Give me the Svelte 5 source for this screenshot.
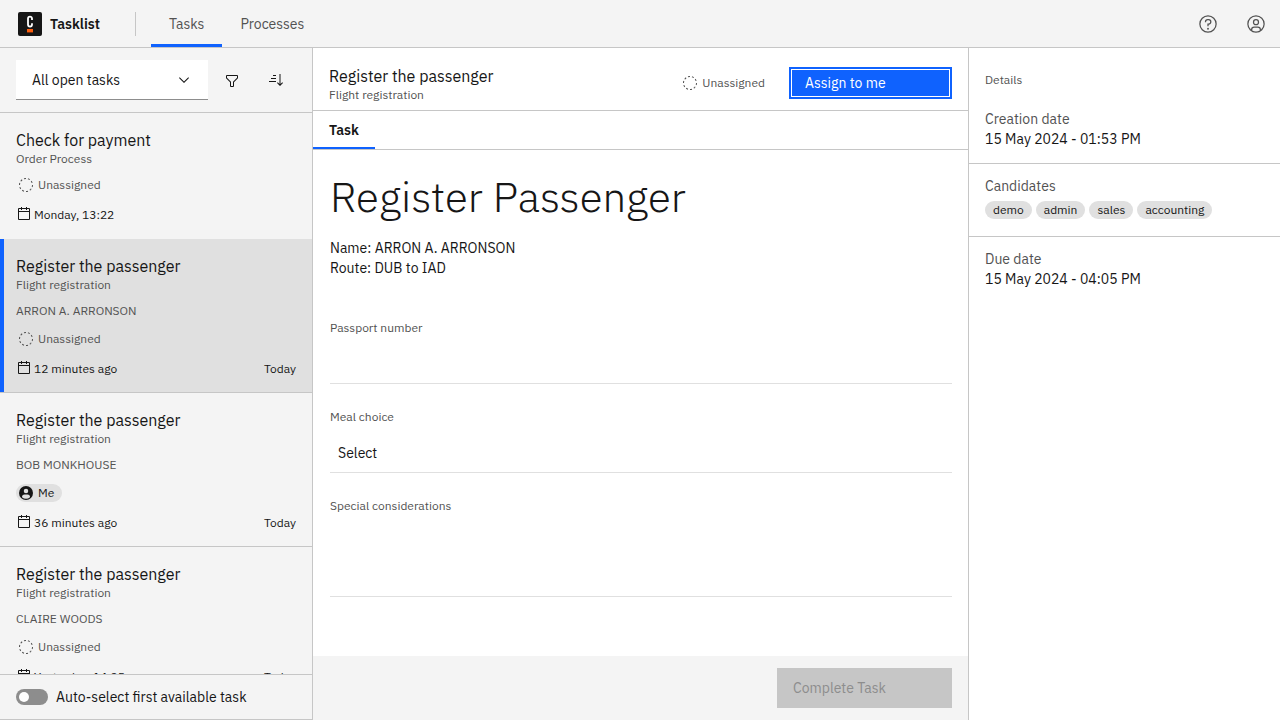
<script lang="ts">
  interface Task {
    name: string;
    process: string;
    context?: string;
    mine?: boolean;
    created: string;
    due?: string;
  }

  const tasks: Task[] = [
    { name: 'Check for payment', process: 'Order Process', created: 'Monday, 13:22' },
    { name: 'Register the passenger', process: 'Flight registration', context: 'ARRON A. ARRONSON', created: '12 minutes ago', due: 'Today' },
    { name: 'Register the passenger', process: 'Flight registration', context: 'BOB MONKHOUSE', mine: true, created: '36 minutes ago', due: 'Today' },
    { name: 'Register the passenger', process: 'Flight registration', context: 'CLAIRE WOODS', created: 'Yesterday, 14:35', due: 'Today' }
  ];
  const candidates = ['demo', 'admin', 'sales', 'accounting'];

  let selected = $state(1);
  let autoSelect = $state(false);
</script>

{#snippet unassigned()}
  <span class="assignee">
    <svg width="16" height="16" viewBox="0 0 32 32" fill="currentColor" aria-hidden="true">
      <path d="M7.7,4.7a14.7,14.7,0,0,0-3,3.1L6.3,9A13.26,13.26,0,0,1,8.9,6.3ZM4.6,12.3l-1.9-.6A12.51,12.51,0,0,0,2,16H4A11.48,11.48,0,0,1,4.6,12.3ZM2.7,20.4a14.4,14.4,0,0,0,2,3.9l1.6-1.2a12.89,12.89,0,0,1-1.7-3.3ZM7.8,27.3a14.4,14.4,0,0,0,3.9,2l.6-1.9A12.89,12.89,0,0,1,9,25.7ZM11.7,2.7l.6,1.9A11.48,11.48,0,0,1,16,4V2A12.51,12.51,0,0,0,11.7,2.7ZM24.2,27.3a15.18,15.18,0,0,0,3.1-3.1L25.7,23A11.53,11.53,0,0,1,23,25.7ZM27.4,19.7l1.9.6A15.47,15.47,0,0,0,30,16H28A11.48,11.48,0,0,1,27.4,19.7ZM29.2,11.6a14.4,14.4,0,0,0-2-3.9L25.6,8.9a12.89,12.89,0,0,1,1.7,3.3ZM24.1,4.6a14.4,14.4,0,0,0-3.9-2l-.6,1.9a12.89,12.89,0,0,1,3.3,1.7ZM20.3,29.3l-.6-1.9A11.48,11.48,0,0,1,16,28v2A21.42,21.42,0,0,0,20.3,29.3Z" />
    </svg>
    Unassigned
  </span>
{/snippet}

<div class="app">
  <header class="topbar">
    <a class="brand" href="#home">
      <svg width="24" height="24" viewBox="0 0 24 24" aria-hidden="true">
        <rect width="24" height="24" rx="2" fill="#161616" />
        <path d="M14 8V6.6a2 2 0 0 0-4 0v6a2 2 0 0 0 4 0v-1.4" fill="none" stroke="#fff" stroke-width="1.8" />
        <rect x="9" y="17" width="6" height="3.4" fill="#fc5d0d" />
      </svg>
      <span>Tasklist</span>
    </a>
    <nav>
      <a class="active" href="#tasks">Tasks</a>
      <a href="#processes">Processes</a>
    </nav>
    <div class="tools">
      <button type="button" aria-label="Help">
        <svg width="20" height="20" viewBox="0 0 32 32" fill="currentColor">
          <path d="M16,2A14,14,0,1,0,30,16,14,14,0,0,0,16,2Zm0,26A12,12,0,1,1,28,16,12,12,0,0,1,16,28Z" />
          <circle cx="16" cy="23.5" r="1.5" />
          <path d="M17,8H15.5A4.49,4.49,0,0,0,11,12.5V13h2v-.5A2.5,2.5,0,0,1,15.5,10H17a2.5,2.5,0,0,1,0,5H15v4.5h2V17a4.5,4.5,0,0,0,0-9Z" />
        </svg>
      </button>
      <button type="button" aria-label="Account">
        <svg width="20" height="20" viewBox="0 0 32 32" fill="currentColor">
          <path d="M16,8a5,5,0,1,0,5,5A5,5,0,0,0,16,8Zm0,8a3,3,0,1,1,3-3A3.0034,3.0034,0,0,1,16,16Z" />
          <path d="M16,2A14,14,0,1,0,30,16,14.0158,14.0158,0,0,0,16,2ZM10,26.3765V25a3.0033,3.0033,0,0,1,3-3h6a3.0033,3.0033,0,0,1,3,3v1.3765a11.8989,11.8989,0,0,1-12,0Zm13.9925-1.4507A5.0016,5.0016,0,0,0,19,20H13a5.0016,5.0016,0,0,0-4.9925,4.9258,12,12,0,1,1,15.985,0Z" />
        </svg>
      </button>
    </div>
  </header>

  <div class="columns">
    <section class="tasks" aria-label="Tasks">
      <div class="filters">
        <div class="dropdown">
          <select aria-label="Task filter">
            <option>All open tasks</option>
          </select>
          <svg width="16" height="16" viewBox="0 0 16 16" aria-hidden="true">
            <path d="M8 11L3 6 3.7 5.3 8 9.6 12.3 5.3 13 6z" fill="#161616" />
          </svg>
        </div>
        <button type="button" aria-label="Custom filter">
          <svg width="16" height="16" viewBox="0 0 32 32" fill="currentColor">
            <path d="M18,30H14a2,2,0,0,1-2-2V20.41L4.59,13A2,2,0,0,1,4,11.59V8A2,2,0,0,1,6,6H26a2,2,0,0,1,2,2V11.59A2,2,0,0,1,27.41,13L20,20.41V28A2,2,0,0,1,18,30ZM6,8V11.59l8,8V28h4V19.59l8-8V8Z" />
          </svg>
        </button>
        <button type="button" aria-label="Sort tasks">
          <svg width="16" height="16" viewBox="0 0 32 32" fill="currentColor">
            <path d="M18 22L19.414 20.586 23 24.172 23 4 25 4 25 24.172 28.586 20.586 30 22 24 28 18 22zM2 18H16V20H2zM6 12H16V14H6zM10 6H16V8H10z" />
          </svg>
        </button>
      </div>

      <div class="list">
        {#each tasks as task, i}
          <button type="button" class="card" class:selected={selected === i} class:before={selected === i + 1} onclick={() => (selected = i)}>
            <span class="head">
              <span class="title">{task.name}</span>
              <span class="sub">{task.process}</span>
            </span>
            {#if task.context}
              <span class="row muted">{task.context}</span>
            {/if}
            <span class="row">
              {#if task.mine}
                <span class="assignee me">
                  <svg width="16" height="16" viewBox="0 0 32 32" aria-hidden="true">
                    <circle cx="16" cy="16" r="14" fill="#161616" />
                    <circle cx="16" cy="12" r="4.5" fill="#e0e0e0" />
                    <path d="M8 24.5V24a5 5 0 0 1 5-5h6a5 5 0 0 1 5 5v.5a11.8 11.8 0 0 1-16 0Z" fill="#e0e0e0" />
                  </svg>
                  Me
                </span>
              {:else}
                {@render unassigned()}
              {/if}
            </span>
            <span class="dates">
              <span class="created">
                <svg width="16" height="16" viewBox="0 0 32 32" fill="currentColor" aria-hidden="true">
                  <path d="M26,4H22V2H20V4H12V2H10V4H6A2,2,0,0,0,4,6V26a2,2,0,0,0,2,2H26a2,2,0,0,0,2-2V6A2,2,0,0,0,26,4Zm0,22H6V12H26Zm0-16H6V6h4V8h2V6h8V8h2V6h4Z" />
                </svg>
                {task.created}
              </span>
              {#if task.due}<span>{task.due}</span>{/if}
            </span>
          </button>
        {/each}
      </div>

      <label class="auto">
        <input type="checkbox" role="switch" bind:checked={autoSelect} />
        <span>Auto-select first available task</span>
      </label>
    </section>

    <main>
      <div class="taskbar">
        <div class="head">
          <span class="title">Register the passenger</span>
          <span class="sub">Flight registration</span>
        </div>
        {@render unassigned()}
        <button type="button" class="assign">Assign to me</button>
      </div>
      <div class="tabs">
        <a href="#task">Task</a>
      </div>
      <form onsubmit={(e) => e.preventDefault()}>
        <h1>Register Passenger</h1>
        <p>Name: ARRON A. ARRONSON<br />Route: DUB to IAD</p>
        <div class="field">
          <label for="passport">Passport number</label>
          <input id="passport" type="text" />
        </div>
        <div class="field">
          <label for="meal">Meal choice</label>
          <select id="meal">
            <option>Select</option>
          </select>
        </div>
        <div class="field">
          <label for="special">Special considerations</label>
          <textarea id="special"></textarea>
        </div>
      </form>
      <footer>
        <button type="button" disabled>Complete Task</button>
      </footer>
    </main>

    <aside>
      <h2>Details</h2>
      <dl>
        <div>
          <dt>Creation date</dt>
          <dd>15 May 2024 - 01:53 PM</dd>
        </div>
        <div>
          <dt>Candidates</dt>
          <dd class="tags">
            {#each candidates as group}<span>{group}</span>{/each}
          </dd>
        </div>
        <div>
          <dt>Due date</dt>
          <dd>15 May 2024 - 04:05 PM</dd>
        </div>
      </dl>
    </aside>
  </div>
</div>

<style>
  :global(body) {
    margin: 0;
  }

  .app {
    --ink: #161616;
    --muted: #525252;
    --line: #c6c6c6;
    --layer: #f4f4f4;
    --blue: #0f62fe;
    display: flex;
    flex-direction: column;
    height: 100vh;
    font-family: 'IBM Plex Sans', 'Liberation Sans', sans-serif;
    font-size: 14px;
    line-height: 20px;
    color: var(--ink);
    background: #fff;
  }

  .app *,
  .app *::before {
    box-sizing: border-box;
  }

  svg {
    display: block;
    flex: none;
  }

  a {
    color: inherit;
    text-decoration: none;
  }

  button,
  select,
  input,
  textarea {
    margin: 0;
    padding: 0;
    border: 0;
    border-radius: 0;
    font: inherit;
    color: inherit;
    background: transparent;
  }

  .topbar {
    display: flex;
    flex: none;
    height: 48px;
    border-bottom: 1px solid var(--line);
    background: var(--layer);
  }

  .brand {
    display: flex;
    align-items: center;
    gap: 8px;
    width: 136px;
    height: 24px;
    margin: 12px 15px 0 0;
    padding-left: 18px;
    border-right: 1px solid var(--line);
    font-weight: 600;
  }

  nav {
    display: flex;
  }

  nav a {
    padding: 14px 18px 0;
    border-bottom: 3px solid transparent;
    color: var(--muted);
  }

  nav a.active {
    border-color: var(--blue);
  }

  .tools {
    display: flex;
    margin-left: auto;
    color: var(--muted);
  }

  .tools button {
    display: grid;
    place-items: center;
    width: 48px;
  }

  .columns {
    display: grid;
    grid-template-columns: 313px minmax(0, 1fr) 312px;
    grid-template-rows: minmax(0, 1fr);
    flex: 1;
    min-height: 0;
  }

  .tasks {
    display: flex;
    flex-direction: column;
    border-right: 1px solid var(--line);
    background: var(--layer);
  }

  .filters {
    display: flex;
    flex: none;
    gap: 4px;
    padding: 12px 16px;
    border-bottom: 1px solid var(--line);
  }

  .filters button {
    display: grid;
    place-items: center;
    width: 40px;
    height: 40px;
  }

  .dropdown {
    display: grid;
    flex: 1;
    align-items: center;
  }

  .dropdown select,
  .dropdown svg {
    grid-area: 1 / 1;
  }

  .dropdown svg {
    justify-self: end;
    margin-right: 16px;
    pointer-events: none;
  }

  .dropdown select {
    appearance: none;
    height: 40px;
    padding: 0 40px 0 16px;
    border-bottom: 1px solid #8d8d8d;
    background: #fff;
  }

  .list {
    flex: 1;
    min-height: 0;
    overflow-y: auto;
    scrollbar-width: none;
  }

  .card {
    display: flex;
    flex-direction: column;
    gap: 10px;
    width: 100%;
    padding: 16px 16px 14px;
    border-bottom: 1px solid var(--line);
    text-align: left;
    font-size: 12px;
    line-height: 18px;
  }

  .card.selected {
    background: linear-gradient(to right, var(--blue) 4px, #e0e0e0 4px);
    background-clip: padding-box;
  }

  .card.before {
    border-bottom-color: transparent;
  }

  .head {
    display: flex;
    flex-direction: column;
  }

  .title {
    font-size: 16px;
    line-height: 23px;
  }

  .sub {
    font-size: 12px;
    line-height: 14px;
    color: var(--muted);
  }

  .row {
    display: flex;
  }

  .muted {
    color: var(--muted);
  }

  .assignee {
    display: flex;
    align-items: center;
    gap: 4px;
    padding: 0 8px 0 2px;
    border-radius: 9px;
    font-size: 12px;
    line-height: 18px;
    color: var(--muted);
  }

  .me {
    color: var(--ink);
    background: #e0e0e0;
  }

  .dates {
    display: flex;
    justify-content: space-between;
    padding-top: 2px;
  }

  .created {
    display: flex;
    align-items: flex-start;
    gap: 2px;
  }

  .auto {
    display: flex;
    flex: none;
    align-items: center;
    gap: 8px;
    height: 46px;
    padding: 0 16px;
    border-top: 1px solid var(--line);
    border-bottom: 1px solid var(--line);
  }

  .auto input {
    appearance: none;
    display: flex;
    width: 32px;
    height: 16px;
    padding: 3px;
    border-radius: 8px;
    background: #8d8d8d;
  }

  .auto input::before {
    content: '';
    width: 10px;
    height: 10px;
    border-radius: 50%;
    background: #fff;
  }

  .auto input:checked {
    justify-content: flex-end;
    background: #198038;
  }

  main {
    display: flex;
    flex-direction: column;
    min-width: 0;
  }

  .taskbar {
    display: flex;
    flex: none;
    align-items: center;
    padding: 8px 16px 0;
    height: 63px;
    border-bottom: 1px solid var(--line);
  }

  .taskbar .head {
    flex: 1;
  }

  .assign {
    width: 163px;
    height: 32px;
    margin-left: 16px;
    padding: 0 16px;
    text-align: left;
    color: #fff;
    background: var(--blue);
    box-shadow:
      inset 0 0 0 2px var(--blue),
      inset 0 0 0 3px #fff;
  }

  .tabs {
    display: flex;
    flex: none;
    height: 39px;
    border-bottom: 1px solid var(--line);
  }

  .tabs a {
    padding: 9px 16px 0;
    border-bottom: 2px solid var(--blue);
    font-weight: 600;
  }

  form {
    display: flex;
    flex: 1;
    flex-direction: column;
    min-height: 0;
    padding: 22px 16px 0 17px;
    overflow-y: auto;
    scrollbar-width: none;
  }

  h1 {
    margin: 0 0 16px;
    font-size: 42px;
    font-weight: 300;
    line-height: 50px;
  }

  p {
    margin: 0 0 42px;
  }

  .field {
    display: flex;
    flex-direction: column;
    gap: 8px;
    margin-bottom: 25px;
  }

  .field label {
    font-size: 12px;
    line-height: 16px;
    color: var(--muted);
  }

  .field input,
  .field select {
    height: 40px;
    padding: 0 8px;
    border-bottom: 1px solid #e0e0e0;
  }

  .field select {
    appearance: none;
  }

  .field textarea {
    height: 75px;
    padding: 8px;
    border-bottom: 1px solid #e0e0e0;
    resize: none;
  }

  footer {
    display: flex;
    flex: none;
    justify-content: flex-end;
    padding: 12px 16px;
    background: var(--layer);
  }

  footer button {
    width: 175px;
    height: 40px;
    padding: 0 16px;
    text-align: left;
    color: #8d8d8d;
    background: var(--line);
  }

  aside {
    border-left: 1px solid var(--line);
  }

  h2 {
    margin: 0;
    padding: 24px 16px 9px;
    font-size: 12px;
    font-weight: 400;
    line-height: 16px;
    color: var(--muted);
  }

  dl {
    margin: 0;
  }

  dl div {
    padding: 12px 16px 14px;
    border-bottom: 1px solid var(--line);
  }

  dl div:last-child {
    border-bottom: 0;
  }

  dt {
    color: var(--muted);
  }

  dd {
    margin: 0;
  }

  .tags {
    display: flex;
    gap: 4px;
    padding: 5px 0 3px;
  }

  .tags span {
    padding: 0 8px;
    border-radius: 9px;
    font-size: 12px;
    line-height: 18px;
    background: #e0e0e0;
  }
</style>
